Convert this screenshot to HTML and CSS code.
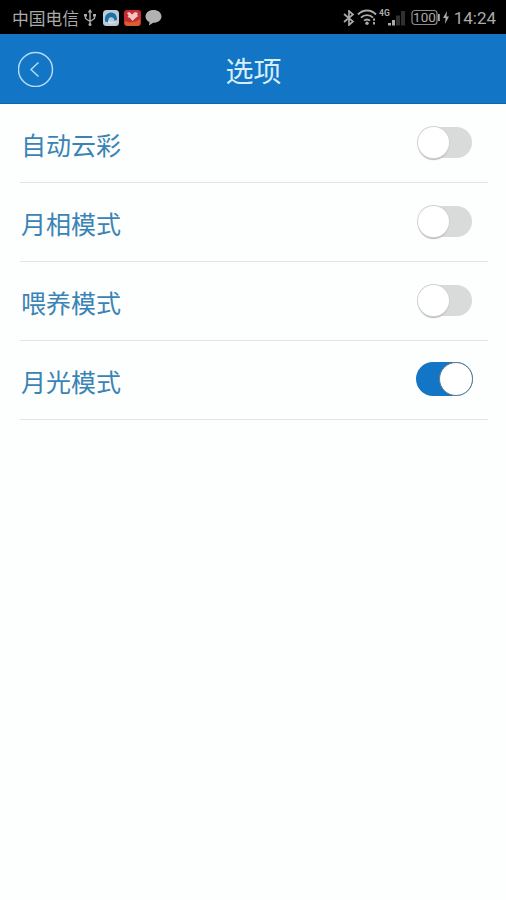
FILE: index.html
```html
<!DOCTYPE html>
<html lang="zh-CN">
<head>
<meta charset="utf-8">
<title>选项</title>
<link rel="stylesheet" href="styles.css">
</head>
<body>
<div class="status">
  <div class="status-left">
    <span class="carrier">中国电信</span>
    <svg class="usb" width="12" height="18" viewBox="0 0 12 18" fill="none" stroke="#aaa" stroke-width="1.4"><path d="M6 3v12M1.500 6v3.500L6 12.500 10.500 9.500V6"/><path d="M6 0 8.300 3.500H3.700zM0 5h3v2.500H0zM9 5h3v2.500H9z" fill="#aaa" stroke="none"/><circle cx="6" cy="15.500" r="1.500" fill="#aaa" stroke="none"/></svg>
    <svg class="app" width="16" height="16" viewBox="0 0 16 16"><rect width="16" height="16" rx="3.500" fill="#b9cbd5"/><path d="M2.200 11.500C1 6 4 2.500 8 2.500c4 0 6.200 3 6 7.500l-2.500.8C11.300 8 9.700 6.800 7.700 7.200 5.500 7.700 5 9.500 5.500 12.500z" fill="#1c6fa8"/><path d="M5.500 10c1.500 2.800 5 3 8.500.8-1.500 3-7 3.500-9 1.700z" fill="#e2e6e8"/></svg>
    <svg class="app" width="17" height="16" viewBox="0 0 17 16"><rect width="17" height="16" rx="3" fill="#c32b37"/><path d="M1 11c4 2 10 2 15-2v4q0 3-3 3H4q-3 0-3-3z" fill="#d8602a"/><path d="m3 3 2.500-1 2.500 2.500L11 2l3 1-1 2 1.500 1-2.500 1.500L8.500 11 6 8 3.500 7l1-1.500z" fill="#f2c6bd"/></svg>
    <svg class="bubble" width="17" height="17" viewBox="0 0 17 17"><path d="M8.500 1C4 1 .5 3.700.5 7.500c0 2.600 1.600 4.500 4 5.600L4 16.500l4.100-2.700c4.700.1 8.400-2.600 8.400-6.300C16.500 3.700 13 1 8.500 1z" fill="#b2b2b2"/></svg>
  </div>
  <div class="status-right">
    <svg width="12" height="16" viewBox="0 0 12 16" fill="none" stroke="#aaa" stroke-width="1.700"><path d="m1 4 9 7.500L6 15V1l4 3.500L1 12"/></svg>
    <svg class="wifi" width="20" height="17" viewBox="0 0 20 17" fill="none" stroke="#aaa" stroke-width="1.900"><path d="M1 5.500C6 .2 14 .2 19 5.500M4 8.700c3.300-3.500 8.700-3.500 12 0M7 11.700c1.700-1.700 4.300-1.700 6 0"/><circle cx="10" cy="14.300" r="1.700" fill="#aaa" stroke="none"/><path d="M17 9.500v2.300m0 1.200v2.500"/></svg>
    <svg class="signal" width="28" height="18" viewBox="0 0 28 18"><text x="0" y="7" class="network">4G</text><path d="M9 14h3v2.500H9zM13 11h3v5.500h-3z" fill="#aaa"/><path d="M17 6.500h4v10h-4zM22 2h4v14.500h-4z" fill="#303030"/></svg>
    <svg class="battery" width="30" height="17" viewBox="0 0 30 17"><rect x="1" y="1.500" width="25" height="14" rx="3" fill="none" stroke="#8c8c8c" stroke-width="1.200"/><path d="M27 5h1.800v7H27z" fill="#aaa"/><text x="13.500" y="13.300" class="charge">100</text></svg>
    <svg class="bolt" width="6" height="13" viewBox="0 0 6 13"><path d="M4 0 0 7h2.500L2 13l4-7.500H3.500z" fill="#aaa"/></svg>
    <span class="time">14:24</span>
  </div>
</div>
<header class="header">
  <svg class="back" width="36" height="36" viewBox="0 0 36 36" fill="none" stroke="#b4daf5"><circle cx="17.500" cy="18.500" r="17" stroke-width="1.500"/><path d="m20.500 11.500-7.500 7 7.500 7" stroke-width="1.500"/></svg>
  <h1 class="title">选项</h1>
</header>
<main class="options">
  <div class="row"><span class="label">自动云彩</span><span class="toggle"><i class="knob"></i></span></div>
  <div class="row"><span class="label">月相模式</span><span class="toggle"><i class="knob"></i></span></div>
  <div class="row"><span class="label">喂养模式</span><span class="toggle"><i class="knob"></i></span></div>
  <div class="row"><span class="label">月光模式</span><span class="toggle on"><i class="knob"></i></span></div>
</main>
</body>
</html>
```

FILE: styles.css
```css
* { box-sizing: border-box; }
body {
  margin: 0;
  min-height: 900px;
  background: #fdfefe;
  font-family: Roboto, "Noto Sans CJK SC", sans-serif;
}
svg { display: block; flex: none; }
.status {
  height: 34px;
  padding: 1px 10px 0 12px;
  display: flex;
  justify-content: space-between;
  background: #000;
  color: #aaa;
}
.status-left, .status-right { display: flex; align-items: center; }
.carrier { padding-top: 2px; font-size: 16.8px; line-height: 32px; white-space: nowrap; }
.usb { margin: 0 7px 0 5px; }
.app { margin-right: 5px; }
.bubble { margin-left: -1px; }
.wifi { margin-left: 2px; }
.signal { margin-left: 2px; }
.network { font-size: 8.5px; font-weight: 700; fill: #aaa; }
.battery { margin-left: 4px; }
.charge { font-size: 13.5px; fill: #aaa; text-anchor: middle; }
.bolt { margin: 0 5px 0 2px; }
.time { font-size: 17px; line-height: 34px; }
.header {
  height: 70px;
  padding: 0 17px 0 18px;
  display: grid;
  grid-template-columns: 36px 1fr 36px;
  align-items: center;
  background: #1275c5;
  border-bottom: 1px solid #0b67b5;
}
.title {
  margin: 0;
  padding-top: 8px;
  text-align: center;
  font-size: 28px;
  line-height: 40px;
  font-weight: 400;
  color: #d8edfa;
}
.options { padding: 0 18px 0 20px; }
.row {
  height: 79px;
  padding: 0 15px 0 1px;
  display: flex;
  align-items: center;
  justify-content: space-between;
  border-bottom: 1px solid #e3e4e4;
}
.label {
  padding-top: 7px;
  font-size: 25px;
  line-height: 36px;
  color: #3a84b5;
}
.toggle {
  width: 54px;
  height: 31px;
  margin: 0 1px 2px 0;
  border-radius: 16px;
  background: #d9dada;
  display: flex;
  align-items: center;
}
.knob {
  width: 31px;
  height: 31px;
  border-radius: 50%;
  background: #fff;
  box-shadow: 0 0 0 1px #d0d1d1, 0 2px 1px #b9baba;
}
.toggle.on {
  width: 57px;
  height: 34px;
  margin-right: 0;
  border-radius: 17px;
  background: #1275c5;
  justify-content: flex-end;
}
.on .knob {
  width: 34px;
  height: 34px;
  border: 1px solid #667d8a;
  box-shadow: none;
}
```
